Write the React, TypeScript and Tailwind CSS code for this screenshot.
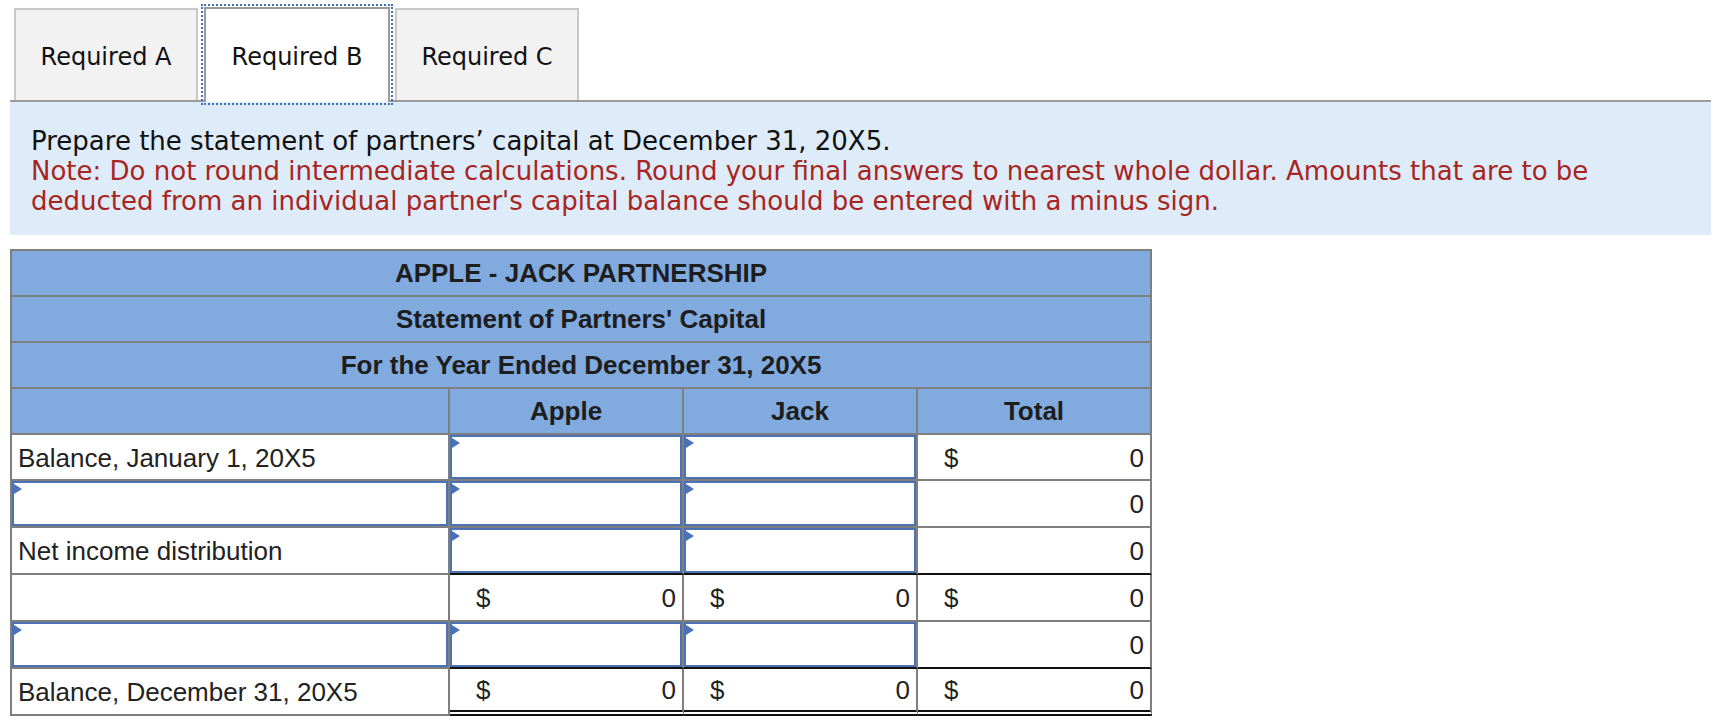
import type { ReactNode } from "react";

type Cell =
  | { kind: "text"; text: string }
  | { kind: "input" }
  | { kind: "amount"; dollar: boolean; value: string };

interface Row {
  h: 46 | 47;
  line: "none" | "single" | "double";
  label: Cell;
  apple: Cell;
  jack: Cell;
  total: Cell;
}

const INPUT: Cell = { kind: "input" };
const amt = (dollar: boolean, value = "0"): Cell => ({ kind: "amount", dollar, value });

const ROWS: Row[] = [
  { h: 46, line: "none", label: { kind: "text", text: "Balance, January 1, 20X5" }, apple: INPUT, jack: INPUT, total: amt(true) },
  { h: 47, line: "none", label: INPUT, apple: INPUT, jack: INPUT, total: amt(false) },
  { h: 47, line: "single", label: { kind: "text", text: "Net income distribution" }, apple: INPUT, jack: INPUT, total: amt(false) },
  { h: 47, line: "none", label: { kind: "text", text: "" }, apple: amt(true), jack: amt(true), total: amt(true) },
  { h: 47, line: "single", label: INPUT, apple: INPUT, jack: INPUT, total: amt(false) },
  { h: 47, line: "double", label: { kind: "text", text: "Balance, December 31, 20X5" }, apple: amt(true), jack: amt(true), total: amt(true) },
];

function InputBox({ h }: { h: 46 | 47 }) {
  // blue bordered entry box with the little flag in the corner
  return (
    <div className={`relative bg-white border-2 border-[#4a72b5] ${h === 46 ? "h-[44px]" : "h-[45px]"}`}>
      <span className="absolute left-0 top-[1px] h-0 w-0 border-y-[5px] border-l-[8px] border-y-transparent border-l-[#4a72b5]" />
    </div>
  );
}

function CellBody({ cell, h }: { cell: Cell; h: 46 | 47 }): ReactNode {
  if (cell.kind === "input") return <InputBox h={h} />;
  if (cell.kind === "amount")
    return (
      <div className="flex justify-between pl-[26px] pr-[6px] pt-[2px]">
        <span>{cell.dollar ? "$" : ""}</span>
        <span>{cell.value}</span>
      </div>
    );
  return <div className="pl-[6px] pt-[2px] whitespace-nowrap">{cell.text}</div>;
}

function Tabs() {
  return (
    <div className="flex items-end border-b-2 border-[#9b9b9b] pl-[4px] pt-[7px] font-['DejaVu_Sans',Verdana,sans-serif] text-[24px] text-[#111]">
      <div className="flex h-[92px] w-[184px] items-center justify-center border-2 border-b-0 border-[#c8c8c8] bg-[#f2f2f2] pt-[4px]">
        Required A
      </div>
      <div className="relative z-10 -mb-[2px] ml-[6px] flex h-[95px] w-[186px] items-center justify-center border-2 border-b-0 border-[#9a9a9a] bg-white pt-[2px] outline-2 outline-offset-[1px] outline-dotted outline-[#3f72c2]">
        Required B
      </div>
      <div className="ml-[5px] flex h-[92px] w-[184px] items-center justify-center border-2 border-b-0 border-[#c8c8c8] bg-[#f2f2f2] pt-[4px]">
        Required C
      </div>
    </div>
  );
}

export default function App() {
  const grayB = "border-b-2 border-b-[#7f7f7f]";
  const numB = (line: Row["line"]) =>
    line === "single"
      ? "border-b-2 border-b-[#111]"
      : line === "double"
        ? "border-b-[6px] border-double border-b-[#111]"
        : "border-b-2 border-b-[#7f7f7f]";

  return (
    <div className="min-h-[726px] w-[1730px] bg-white">
      <div className="ml-[10px] w-[1701px]">
        <Tabs />

        <div className="bg-[#deebf8] pb-[19px] pl-[21px] pt-[24px] font-['DejaVu_Sans',Verdana,sans-serif] text-[26px] leading-[30px]">
          <p className="text-[#111]">Prepare the statement of partners’ capital at December 31, 20X5.</p>
          <p className="text-[#a8251f]">
            Note: Do not round intermediate calculations. Round your final answers to nearest whole dollar. Amounts that are to be
            <br />
            deducted from an individual partner's capital balance should be entered with a minus sign.
          </p>
        </div>

        <table className="mt-[14px] w-[1142px] table-fixed border-separate border-spacing-0 border-l-2 border-t-2 border-[#7f7f7f] font-['Liberation_Sans',Arial,sans-serif] text-[26px] text-[#222]">
          <colgroup>
            <col className="w-[438px]" />
            <col className="w-[234px]" />
            <col className="w-[234px]" />
            <col className="w-[234px]" />
          </colgroup>
          <thead className="bg-[#81aadf] font-bold text-[#1e1e1e]">
            {["APPLE - JACK PARTNERSHIP", "Statement of Partners' Capital", "For the Year Ended December 31, 20X5"].map((t) => (
              <tr key={t} className="h-[46px]">
                <th colSpan={4} className="border-b-2 border-r-2 border-[#7f7f7f] p-0 text-center font-bold">
                  {t}
                </th>
              </tr>
            ))}
            <tr className="h-[46px]">
              <th className="border-b-2 border-r-2 border-[#7f7f7f] p-0" />
              <th className="border-b-2 border-r-2 border-[#7f7f7f] p-0 text-center font-bold">Apple</th>
              <th className="border-b-2 border-r-2 border-[#7f7f7f] p-0 text-center font-bold">Jack</th>
              <th className="border-b-2 border-r-2 border-[#7f7f7f] p-0 text-center font-bold">Total</th>
            </tr>
          </thead>
          <tbody>
            {ROWS.map((r, i) => (
              <tr key={i} className={r.h === 46 ? "h-[46px]" : "h-[47px]"}>
                <td className={`border-r-2 border-r-[#7f7f7f] p-0 ${grayB} ${r.label.kind === "input" ? "align-top" : "align-middle"}`}>
                  <CellBody cell={r.label} h={r.h} />
                </td>
                {[r.apple, r.jack, r.total].map((c, j) => (
                  <td
                    key={j}
                    className={`border-r-2 border-r-[#7f7f7f] p-0 ${numB(r.line)} ${c.kind === "input" ? "align-top" : "align-middle"}`}
                  >
                    <CellBody cell={c} h={r.h} />
                  </td>
                ))}
              </tr>
            ))}
          </tbody>
        </table>
      </div>
    </div>
  );
}
